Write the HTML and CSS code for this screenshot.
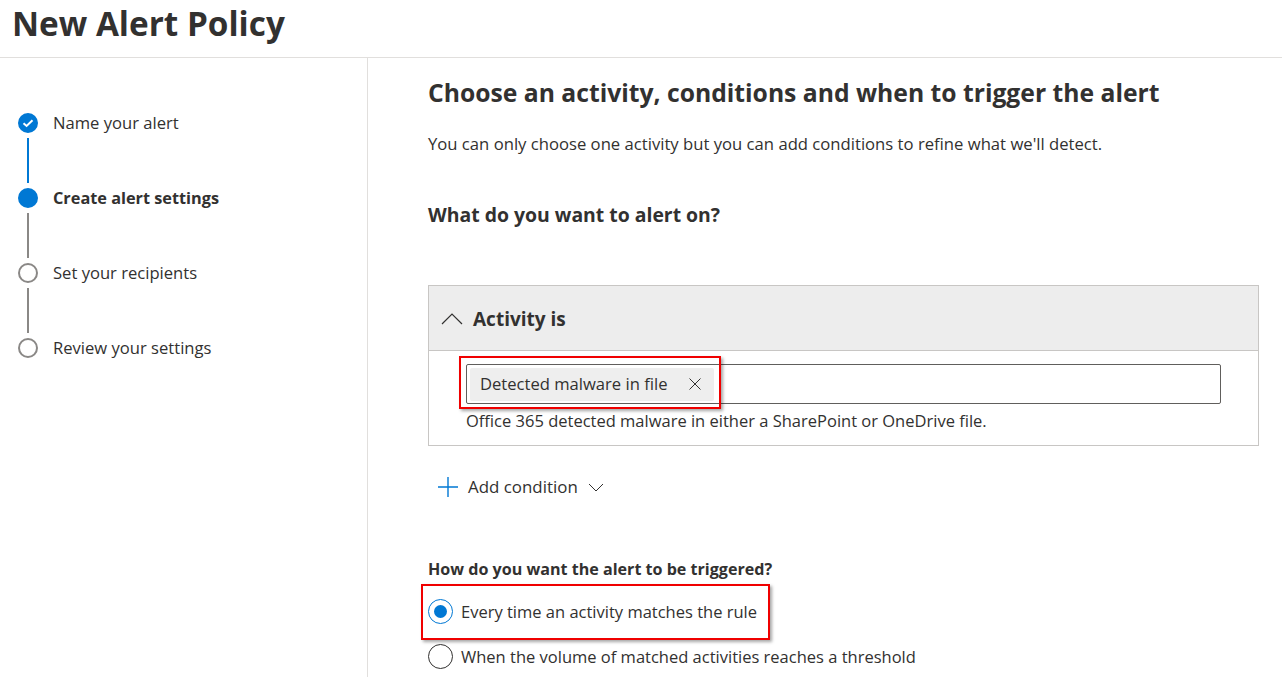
FILE: index.html
```html
<!DOCTYPE html>
<html lang="en">
<head>
  <meta charset="UTF-8">
  <title>New Alert Policy</title>
  <link rel="stylesheet" href="styles.css">
</head>
<body>
  <header class="page-header">
    <h1>New Alert Policy</h1>
  </header>

  <div class="layout">
    <nav class="steps">
      <div class="step">
        <div class="step-marker">
          <span class="dot dot-done">
            <svg width="12" height="12" viewBox="0 0 12 12"><path d="M1.5 6.2 4.6 9 10.5 3.2" fill="none" stroke="#fff" stroke-width="2"/></svg>
          </span>
          <span class="line line-done"></span>
        </div>
        <span class="step-label">Name your alert</span>
      </div>
      <div class="step">
        <div class="step-marker">
          <span class="dot dot-current"></span>
          <span class="line"></span>
        </div>
        <span class="step-label step-label-current">Create alert settings</span>
      </div>
      <div class="step">
        <div class="step-marker">
          <span class="dot"></span>
          <span class="line"></span>
        </div>
        <span class="step-label">Set your recipients</span>
      </div>
      <div class="step">
        <div class="step-marker">
          <span class="dot"></span>
        </div>
        <span class="step-label">Review your settings</span>
      </div>
    </nav>

    <main class="content">
      <h2>Choose an activity, conditions and when to trigger the alert</h2>
      <p class="intro">You can only choose one activity but you can add conditions to refine what we'll detect.</p>
      <h3>What do you want to alert on?</h3>

      <section class="panel">
        <div class="panel-head">
          <svg width="22" height="12" viewBox="0 0 22 12"><path d="M1 11 11 1l10 10" fill="none" stroke="#323130" stroke-width="1.2"/></svg>
          <span>Activity is</span>
        </div>
        <div class="panel-body">
          <div class="picker">
            <span class="tag">
              <span class="tag-text">Detected malware in file</span>
              <svg width="14" height="14" viewBox="0 0 14 14"><path d="M1.5 1.5l11 11M12.5 1.5l-11 11" fill="none" stroke="#323130" stroke-width="1"/></svg>
            </span>
          </div>
          <div class="hint">Office 365 detected malware in either a SharePoint or OneDrive file.</div>
          <div class="callout callout-tag"></div>
        </div>
      </section>

      <div class="add-condition">
        <svg width="20" height="20" viewBox="0 0 20 20"><path d="M10 0v20M0 10h20" fill="none" stroke="#0078d4" stroke-width="1.4"/></svg>
        <span class="add-text">Add condition</span>
        <svg width="16" height="9" viewBox="0 0 16 9"><path d="M1 1l7 7 7-7" fill="none" stroke="#323130" stroke-width="1"/></svg>
      </div>

      <div class="trigger">
        <div class="trigger-title">How do you want the alert to be triggered?</div>
        <div class="radio-row">
          <span class="radio radio-on"></span>
          <span>Every time an activity matches the rule</span>
        </div>
        <div class="radio-row">
          <span class="radio"></span>
          <span>When the volume of matched activities reaches a threshold</span>
        </div>
        <div class="callout callout-radio"></div>
      </div>
    </main>
  </div>
</body>
</html>
```

FILE: styles.css
```css
html, body {
  height: 100%;
}

body {
  margin: 0;
  height: 677px;
  overflow: hidden;
  background-color: white;
  color: #323130;
  font-family: "Open Sans", "Noto Sans", sans-serif;
  font-size: 16.6px;
}

.page-header {
  height: 58px;
  box-sizing: border-box;
  border-bottom: 1px solid #e1dfdd;
  padding-left: 12px;
}

h1 {
  margin: 0;
  font-size: 33.3px;
  font-weight: 700;
  line-height: 46px;
}

.layout {
  display: flex;
  height: 619px;
}

.steps {
  width: 368px;
  box-sizing: border-box;
  border-right: 1px solid #e1dfdd;
  padding: 55px 0 0 18px;
}

.step {
  display: flex;
  gap: 15px;
  height: 75px;
}

.step-marker {
  display: flex;
  flex-direction: column;
  align-items: center;
  width: 20px;
}

.dot {
  display: flex;
  align-items: center;
  justify-content: center;
  width: 20px;
  height: 20px;
  box-sizing: border-box;
  border: 2px solid #8a8886;
  border-radius: 50%;
  flex-shrink: 0;
}

.dot-done, .dot-current {
  background-color: #0078d4;
  border-color: #0078d4;
}

.line {
  width: 2px;
  height: 45px;
  margin-top: 5px;
  background-color: #8a8886;
}

.line-done {
  background-color: #0078d4;
}

.step-label {
  line-height: 20px;
}

.step-label-current {
  font-size: 16.3px;
  font-weight: 700;
}

.content {
  flex: 1;
  padding-left: 60px;
  padding-right: 23px;
}

h2 {
  margin: 19px 0 0;
  font-size: 24.7px;
  font-weight: 700;
  line-height: 32px;
}

.intro {
  margin: 24px 0 0;
  font-size: 16.67px;
  line-height: 22px;
}

h3 {
  margin: 47px 0 0;
  font-size: 19.4px;
  font-weight: 700;
  line-height: 26px;
}

.panel {
  margin-top: 57px;
  border: 1px solid #c8c6c4;
}

.panel-head {
  display: flex;
  align-items: center;
  gap: 10px;
  height: 65px;
  box-sizing: border-box;
  padding: 1px 0 0 12px;
  background-color: #ededed;
  border-bottom: 1px solid #c8c6c4;
  font-size: 19px;
  font-weight: 700;
}

.panel-body {
  position: relative;
  padding: 13px 37px 13px;
}

.picker {
  display: flex;
  align-items: center;
  height: 38px;
  padding-left: 3px;
  border: 1px solid #605e5c;
  border-radius: 2px;
}

.tag {
  display: flex;
  align-items: center;
  justify-content: space-between;
  width: 244px;
  height: 33px;
  box-sizing: border-box;
  padding: 0 12px 0 10px;
  background-color: #eeeeee;
  border-radius: 2px;
}

.tag-text {
  margin-top: -2px;
}

.hint {
  font-size: 16.5px;
  line-height: 22px;
  margin-top: 6px;
}

.add-condition {
  display: flex;
  align-items: center;
  gap: 10px;
  margin: 31px 0 0 10px;
  height: 20px;
  font-size: 16.9px;
}

.add-text {
  margin-top: -2px;
}

.trigger {
  position: relative;
  margin-top: 61px;
}

.trigger-title {
  font-size: 16.1px;
  font-weight: 700;
  line-height: 22px;
}

.radio-row {
  display: flex;
  align-items: center;
  gap: 8px;
  height: 26px;
  margin-top: 19px;
  font-size: 16.5px;
}

.trigger-title + .radio-row {
  margin-top: 18px;
}

.radio {
  position: relative;
  width: 25px;
  height: 25px;
  box-sizing: border-box;
  border: 1px solid #323130;
  border-radius: 50%;
}

.radio-on {
  border-color: #0078d4;
}

.radio-on::after {
  content: "";
  position: absolute;
  left: 5px;
  top: 5px;
  width: 13px;
  height: 13px;
  border-radius: 50%;
  background-color: #0078d4;
}

/* red annotation boxes laid over the screenshot */
.callout {
  position: absolute;
  box-sizing: border-box;
  border: 2px solid #f00000;
  box-shadow: 2px 2px 3px rgba(0, 0, 0, 0.35);
}

.callout-tag {
  left: 30px;
  top: 5px;
  width: 262px;
  height: 53px;
}

.callout-radio {
  left: -7px;
  top: 26px;
  width: 349px;
  height: 56px;
}
```
